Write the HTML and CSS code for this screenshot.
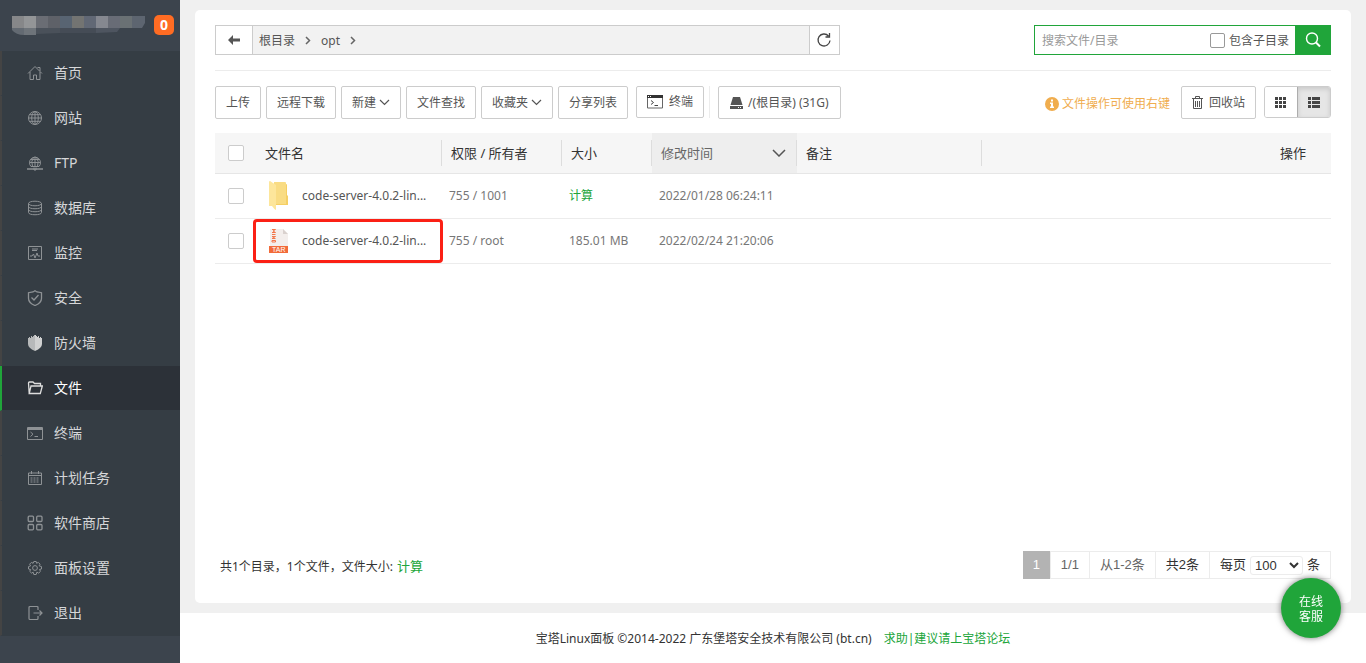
FILE: index.html
```html
<!DOCTYPE html>
<html lang="zh-CN">
<head>
<meta charset="utf-8">
<title>文件 - 宝塔Linux面板</title>
<link rel="stylesheet" href="styles.css">
</head>
<body>
<aside class="sidebar">
  <div class="server">
    <svg class="server-name" width="134" height="22" viewBox="0 0 134 22" aria-hidden="true">
      <path fill="#868789" d="M0 2h12v12H0z"/><path fill="#939597" d="M12 2h12v12H12z"/><path fill="#6a6d74" d="M24 2h12v12H24z"/><path fill="#5e6168" d="M36 2h12v12H36z"/><path fill="#586472" d="M48 2h12v12H48z"/><path fill="#737472" d="M60 2h12v12H60z"/><path fill="#616875" d="M72 2h12v12H72z"/><path fill="#858890" d="M84 2h12v12H84z"/><path fill="#686c76" d="M96 2h12v12H96z"/><path fill="#6a7174" d="M108 2h12v12h-12z"/><path fill="#5d6570" d="M120 2h13v7l-3 5h-10z"/>
      <path fill="#636a72" d="M0 14h12v7q-8 0-12-5z"/><path fill="#6e747a" d="M12 14h12v7H12z"/><path fill="#4a515a" d="M24 14h24v5l-24 1z"/><path fill="#454c56" d="M48 14h36v5H48z"/><path fill="#4e5560" d="M84 14h24l-3 4-21 1z"/>
    </svg>
    <span class="badge">0</span>
  </div>
  <nav class="menu">
    <a href="#"><svg viewBox="0 0 16 16"><path d="M1 8.500 8 1.500 15 8.500M10.500 2.500h2.500v3.500M3 7v7.500h3.500V10h3v4.500H13V7"/></svg>首页</a>
    <a href="#"><svg viewBox="0 0 16 16"><circle cx="8" cy="8" r="6.500"/><ellipse cx="8" cy="8" rx="3.300" ry="6.500"/><path d="M8 1.500v13M1.500 8h13M2.500 4.700h11M2.500 11.300h11"/></svg>网站</a>
    <a href="#"><svg viewBox="0 0 16 16"><path d="M4 11.500a5.500 5.500 0 1 1 8 0zM8 1.500v10M2.500 7.500h11M3.500 4.500h9M5.500 11.500q-1.800-5 1-9.500M10.500 11.500q1.800-5-1-9.500"/><path stroke-width="1.500" d="M0 14h16"/><path d="M7 12.500v2.500h2v-2.500"/></svg>FTP</a>
    <a href="#"><svg viewBox="0 0 16 16"><ellipse cx="8" cy="3.500" rx="6.500" ry="2.300"/><path d="M1.500 3.500v9c0 3 13 3 13 0v-9M1.500 6.500c0 3 13 3 13 0M1.500 9.500c0 3 13 3 13 0"/></svg>数据库</a>
    <a href="#"><svg viewBox="0 0 16 16"><path d="M1.500 1.500h13v13h-13zM5 4h6M5 5.500h5M3 11h2l1.500-2L8 13l2-5 1 3h2"/></svg>监控</a>
    <a href="#"><svg viewBox="0 0 16 16"><path stroke-width="1.300" d="M8 .7 10 2l4.500.7v5.500Q14.500 13 8 15.500 1.500 13 1.500 8.200V2.700L6 2zM4.500 7.500 7 10l4.500-5"/></svg>安全</a>
    <a href="#"><svg viewBox="0 0 16 16"><path fill="#b7b9ba" stroke="none" d="M8 0v16Q1 13 1 9V3h1V2h1v1h1V1h1v1h1V1h1V0z"/><path fill="#d0d1d1" stroke="none" d="M8 0h1v1h1v1h1V1h1v2h1V2h1v1h1v6q0 4-7 7z"/></svg>防火墙</a>
    <a href="#" class="active"><svg viewBox="0 0 16 16"><path stroke-width="1.300" d="M2.200 13.500 1.500 3q0-1 1-1H6l1.500 1.500h6V6M2.200 13.500 4 6h11.300l-2 7.500z"/></svg>文件</a>
    <a href="#"><svg viewBox="0 0 16 16"><path d="M.5 2.500h15v12H.5zM3.500 7l2.500 2.200-2.500 2.300M7.500 11.500H11"/><path stroke-width="2" d="M1 4h14"/></svg>终端</a>
    <a href="#"><svg viewBox="0 0 16 16"><path d="M1.500 3h13v11.500h-13zM1.500 5.500h13M4.500 1v3M11.500 1v3"/><path stroke-dasharray="2 1" d="M3.500 8h9M3.500 10h9M3.500 12h9"/></svg>计划任务</a>
    <a href="#"><svg viewBox="0 0 16 16"><g stroke-width="1.300"><rect x="1.200" y="1.200" width="5.300" height="5.300" rx="1"/><rect x="9.700" y="1.200" width="5.300" height="5.300" rx="1"/><rect x="1.200" y="9.500" width="5.300" height="5.300" rx="1"/><rect x="9.700" y="9.500" width="5.300" height="5.300" rx="1"/></g></svg>软件商店</a>
    <a href="#"><svg viewBox="0 0 16 16"><circle cx="8" cy="8" r="2.400"/><path d="m6.800 1.500h2.400l.4 1.800 1.700-.9 1.800 1.800-1 1.600 2.400.8v2.400l-2 .5 1 1.800-1.800 1.800-1.800-1-.7 2.400H6.800l-.6-2.300-1.700.9-1.800-1.800 1-1.800-2.200-.5V6.600l2.100-.7-1-1.700 1.800-1.800 1.700.9z"/></svg>面板设置</a>
    <a href="#"><svg viewBox="0 0 16 16"><path stroke-width="1.200" d="M11 5V2.500q0-1-1-1H3q-1 0-1 1v11q0 1 1 1h7q1 0 1-1V11M6.500 8H15M12.500 5.500 15 8l-2.500 2.500"/></svg>退出</a>
  </nav>
</aside>

<div class="page">
  <main class="card">
    <div class="topbar">
      <div class="path">
        <button class="path-btn back" aria-label="返回"><svg width="12" height="10" viewBox="0 0 12 10"><path fill="#555" d="M0 5 5 0v3.500h7v3H5V10z"/></svg></button>
        <div class="crumbs">
          <a href="#">根目录</a><svg width="6" height="9" viewBox="0 0 6 9"><path d="m1 1 3.500 3.500L1 8"/></svg>
          <a href="#">opt</a><svg width="6" height="9" viewBox="0 0 6 9"><path d="m1 1 3.500 3.500L1 8"/></svg>
        </div>
        <button class="path-btn refresh" aria-label="刷新"><svg width="16" height="16" viewBox="0 0 16 16"><path fill="none" stroke="#444" stroke-width="1.300" d="M14 8.500A6 6 0 1 1 12.500 4M13.500 1v4H9.500"/></svg></button>
      </div>
      <form class="search">
        <input class="search-text" type="text" placeholder="搜索文件/目录" aria-label="搜索文件/目录">
        <label class="sub"><input type="checkbox" class="check small">包含子目录</label>
        <button type="button" class="search-btn" aria-label="搜索"><svg width="16" height="16" viewBox="0 0 16 16"><g fill="none" stroke="#fff"><circle cx="7" cy="6.500" r="5.500" stroke-width="1.400"/><path stroke-width="2" d="m11 10.500 4 4"/></g></svg></button>
      </form>
    </div>

    <div class="toolbar">
      <button class="btn">上传</button>
      <button class="btn">远程下载</button>
      <button class="btn">新建<svg class="caret" width="11" height="7" viewBox="0 0 11 7"><path d="m1 1 4.500 4.500L10 1"/></svg></button>
      <button class="btn">文件查找</button>
      <button class="btn">收藏夹<svg class="caret" width="11" height="7" viewBox="0 0 11 7"><path d="m1 1 4.500 4.500L10 1"/></svg></button>
      <button class="btn">分享列表</button>
      <button class="btn terminal"><svg width="16" height="14" viewBox="0 0 16 14"><path fill="#fff" stroke="#666" d="M.5 1h15v12H.5z"/><path fill="#333" d="M0 0h16v3H0z"/><path fill="#fff" d="M1 1h1v1H1zM3 1h1v1H3z"/><path fill="none" stroke="#444" d="m4 5.500 2.500 2L4 9.500M7.500 10.500H11"/></svg>终端</button>
      <span class="divider"></span>
      <button class="btn disk"><svg width="13" height="12" viewBox="0 0 13 12"><path fill="#555" d="M3 0h7l2.500 8H.5zM0 9h13v3H0z"/><path fill="#fff" d="M8 10h1v1H8zM10 10h1v1h-1z"/></svg>/(根目录) (31G)</button>
      <span class="tip"><svg width="14" height="14" viewBox="0 0 14 14"><circle cx="7" cy="7" r="7" fill="#f0ad4e"/><path fill="#fff" d="M6 2.500h2v2H6zM5 5.500h3v4h1V11H5V9.500h1V7H5z"/></svg>文件操作可使用右键</span>
      <button class="btn trash"><svg width="11" height="13" viewBox="0 0 11 13"><path fill="none" stroke="#555" d="M0 2.500h11M3.500 2.500v-2h4v2M1.500 3v9.500h8V3M3.500 5v6M5.500 5v6M7.500 5v6"/></svg>回收站</button>
      <div class="views">
        <button aria-label="图标视图"><svg width="12" height="11" viewBox="0 0 12 11"><path d="M0 0h3v3H0zM4 0h3v3H4zM8 0h3v3H8zM0 4h3v3H0zM4 4h3v3H4zM8 4h3v3H8zM0 8h3v3H0zM4 8h3v3H4zM8 8h3v3H8z"/></svg></button>
        <button class="on" aria-label="列表视图"><svg width="12" height="11" viewBox="0 0 12 11"><path d="M0 0h3v3H0zM4 0h8v3H4zM0 4h3v3H0zM4 4h8v3H4zM0 8h3v3H0zM4 8h8v3H4z"/></svg></button>
      </div>
    </div>

    <table class="files">
      <colgroup><col class="c-check"><col class="c-name"><col class="c-perm"><col class="c-size"><col class="c-time"><col class="c-note"><col></colgroup>
      <thead>
        <tr>
          <th><input type="checkbox" class="check" aria-label="全选"></th>
          <th class="line">文件名</th>
          <th class="line">权限 / 所有者</th>
          <th class="line">大小</th>
          <th class="line sorted"><div class="sort">修改时间<svg width="14" height="8" viewBox="0 0 14 8"><path d="m1 1 6 6 6-6"/></svg></div></th>
          <th class="line">备注</th>
          <th class="ops">操作</th>
        </tr>
      </thead>
      <tbody>
        <tr>
          <td><input type="checkbox" class="check" aria-label="选择文件夹"></td>
          <td><a href="#" class="file"><svg width="22" height="30" viewBox="0 0 22 30"><path fill="#f5cf64" d="M4 3h14q1 0 1 1v10l1 1v9H6z"/><path fill="#f9dc83" d="M6 1h11q1 0 1 1v21H6z"/><path fill="#fde69b" d="M1 1q0-1 1-1l6 4v25q-2-1-4-4H1z"/></svg>code-server-4.0.2-lin...</a></td>
          <td>755 / 1001</td>
          <td><a href="#" class="green">计算</a></td>
          <td>2022/01/28 06:24:11</td>
          <td></td><td></td>
        </tr>
        <tr>
          <td><input type="checkbox" class="check" aria-label="选择文件"></td>
          <td class="marked"><a href="#" class="file"><svg width="22" height="26" viewBox="0 0 22 26"><path fill="#f3eeec" d="M2 1h13l5 5v13H2z"/><path fill="#d9d1ce" d="M15 1v5h5z"/><path fill="none" stroke="#f2764a" d="M4 1.500h3.500L5 3l2.500 1.500H4M4 6.500h3.500M4 8.500h3.500L4 10.500h3.500M7.500 14v-1.500H4V14h3.500"/><path fill="#f26b3a" d="M1 18h19v7H1z"/><text class="ext" x="4" y="24">TAR</text></svg>code-server-4.0.2-lin...</a></td>
          <td>755 / root</td>
          <td>185.01 MB</td>
          <td>2022/02/24 21:20:06</td>
          <td></td><td></td>
        </tr>
      </tbody>
    </table>

    <div class="bottom">
      <div class="summary">共1个目录，1个文件，文件大小: <a href="#" class="green">计算</a></div>
      <div class="pager">
        <span class="current">1</span><span class="muted">1/1</span><span class="muted">从1-2条</span><span>共2条</span>
        <label>每页<select><option>100</option><option>200</option></select>条</label>
      </div>
    </div>
  </main>
  <footer class="footer">宝塔Linux面板 ©2014-2022 广东堡塔安全技术有限公司 (bt.cn)<a href="#" class="green">求助|建议请上宝塔论坛</a></footer>
</div>
<button class="service">在线<br>客服</button>
</body>
</html>
```
FILE: styles.css
```css
* { box-sizing: border-box; }
body {
  margin: 0;
  min-height: 100vh;
  display: flex;
  background: #f0f0f0;
  color: #333;
  font: 12px/18px "Noto Sans", "Noto Sans CJK SC", sans-serif;
}
a { color: inherit; text-decoration: none; }
button, input, select { font: inherit; color: inherit; }
button { cursor: pointer; }
svg { flex: none; }
.green { color: #20a53a; }

.sidebar { width: 180px; flex: none; background: #3c444d; }
.server { height: 51px; padding: 0 6px 2px 12px; display: flex; align-items: center; justify-content: space-between; }
.badge {
  width: 20px; height: 20px; border-radius: 5px;
  background: #ff6c23; color: #fff;
  font-weight: 700; font-size: 14px; line-height: 20px; text-align: center;
}
.menu a {
  display: flex; align-items: center; gap: 11px;
  height: 45px; padding-left: 25px;
  border-left: 2px solid #444;
  border-bottom: 1px solid #353d44;
  background: #353d44; color: #d6d7d9; font-size: 14px;
}
.menu svg { width: 16px; height: 16px; fill: none; stroke: #8e9295; }
.menu .active { background: #2c3138; color: #fff; border-left-color: #20a53a; }
.menu .active svg { stroke: #ddd; }

.page { flex: 1; min-width: 0; display: flex; flex-direction: column; }
.card {
  flex: 1; display: flex; flex-direction: column;
  margin: 10px 15px; padding: 15px 20px 24px;
  border-radius: 5px; background: #fff;
}
.footer {
  height: 50px; padding-top: 2px; background: #fff;
  display: flex; align-items: center; justify-content: center; gap: 12px;
}

.topbar { display: flex; justify-content: space-between; padding-bottom: 15px; border-bottom: 1px solid #ececec; }
.path { display: flex; width: 56%; height: 30px; border: 1px solid #ccc; }
.path-btn { display: flex; align-items: center; justify-content: center; padding: 0; border: 0; background: #fff; }
.back { width: 37px; border-right: 1px solid #ccc; }
.refresh { width: 30px; border-left: 1px solid #ccc; }
.crumbs { flex: 1; display: flex; align-items: center; gap: 10px; padding: 1px 0 0 6px; background: #f2f2f2; color: #555; }
.crumbs svg { fill: none; stroke: #666; stroke-width: 1.5; }
.search { display: flex; width: 297px; height: 30px; border: 1px solid #20a53a; }
.search-text { flex: 1; min-width: 0; border: 0; outline: 0; padding: 2px 7px 0; background: none; }
.search-text::placeholder { color: #999; opacity: 1; }
.sub { display: flex; align-items: center; gap: 4px; padding: 1px 6px 0 0; color: #555; }
.search-btn { width: 35px; padding: 0; border: 0; background: #20a53a; display: flex; align-items: center; justify-content: center; }
.check { appearance: none; display: block; width: 16px; height: 16px; margin: 0; border: 1px solid #ccc; border-radius: 2px; background: #fff; }
.small { width: 15px; height: 15px; border-color: #999; }

.toolbar { display: flex; gap: 5px; padding: 15px 0 12px; }
.btn {
  height: 33px; padding: 0 10px;
  display: flex; align-items: center;
  border: 1px solid #ccc; border-radius: 2px;
  background: #fff; color: #555; white-space: nowrap;
}
.caret { margin-left: 3px; fill: none; stroke: #555; stroke-width: 1.2; }
.terminal { height: 32px; margin-left: 3px; gap: 6px; }
.divider { width: 1px; height: 32px; background: #ececec; }
.disk { margin-left: 3px; padding: 0 11px; gap: 5px; }
.tip { display: flex; align-items: center; gap: 3px; height: 35px; margin: 0 6px 0 auto; color: #f0ad4e; }
.trash { gap: 6px; margin-right: 3px; }
.views { display: flex; width: 67px; height: 32px; border: 1px solid #ccc; border-radius: 3px; overflow: hidden; }
.views button { flex: 1; padding: 0; display: flex; align-items: center; justify-content: center; border: 0; background: #fff; }
.views svg { fill: #444; }
.views .on { background: #e6e6e6; border-left: 1px solid #adadad; box-shadow: inset 0 2px 5px #0002; }

.files { width: 100%; table-layout: fixed; border-collapse: separate; border-spacing: 0; }
.c-check { width: 41px; }
.c-name { width: 186px; }
.c-perm { width: 120px; }
.c-size { width: 90px; }
.c-time { width: 145px; }
.c-note { width: 185px; }
.files th {
  height: 41px; padding: 0 9px; background: #f6f6f6; border-bottom: 1px solid #e6e6e6;
  font-size: 13px; font-weight: 400; text-align: left; white-space: nowrap;
}
.files .line { background: linear-gradient(#ddd, #ddd) right center / 1px 26px no-repeat #f6f6f6; }
.files .sorted { background-color: #eee; color: #666; padding-right: 11px; }
.sort { display: flex; align-items: center; justify-content: space-between; }
.sort svg { fill: none; stroke: #555; stroke-width: 1.5; }
.files .ops { text-align: right; padding-right: 25px; }
.files td { height: 45px; padding: 0 7px; border-bottom: 1px solid #ececec; color: #777; white-space: nowrap; }
.files th:first-child, .files td:first-child { padding: 0 13px; }
.file { display: flex; align-items: center; gap: 12px; padding-left: 5px; color: #555; }
.ext { font: 7px "Liberation Sans", sans-serif; fill: #fff; }
.marked { position: relative; }
.marked::after {
  content: ""; position: absolute; inset: 0 -1px 0 -3px;
  border: 3px solid #fb2015; border-radius: 4px; pointer-events: none;
}

.bottom { display: flex; align-items: center; justify-content: space-between; margin-top: auto; }
.summary { padding: 2px 0 0 5px; }
.summary a { margin-left: 1px; font-size: 13px; }
.pager { display: flex; height: 28px; font-family: "Liberation Sans", "Noto Sans CJK SC", sans-serif; font-size: 13px; border: 1px solid #ececec; }
.pager span, .pager label { display: flex; align-items: center; padding: 0 10px; border-right: 1px solid #ececec; }
.pager label { border-right: 0; gap: 4px; }
.pager .current { margin: -1px 0 -1px -1px; background: #b3b3b3; color: #fff; }
.pager .muted { color: #666; }
.pager select { height: 19px; width: 53px; padding: 0; border: 1px solid #ececec; border-radius: 3px; background: #fff; line-height: 16px; }

.service {
  position: fixed; right: 25px; bottom: 25px;
  width: 60px; height: 60px; padding: 2px 0 0; border: 0; border-radius: 50%;
  background: #20a53a; color: #fff; line-height: 15px;
  box-shadow: 0 0 6px #0008;
}
```
